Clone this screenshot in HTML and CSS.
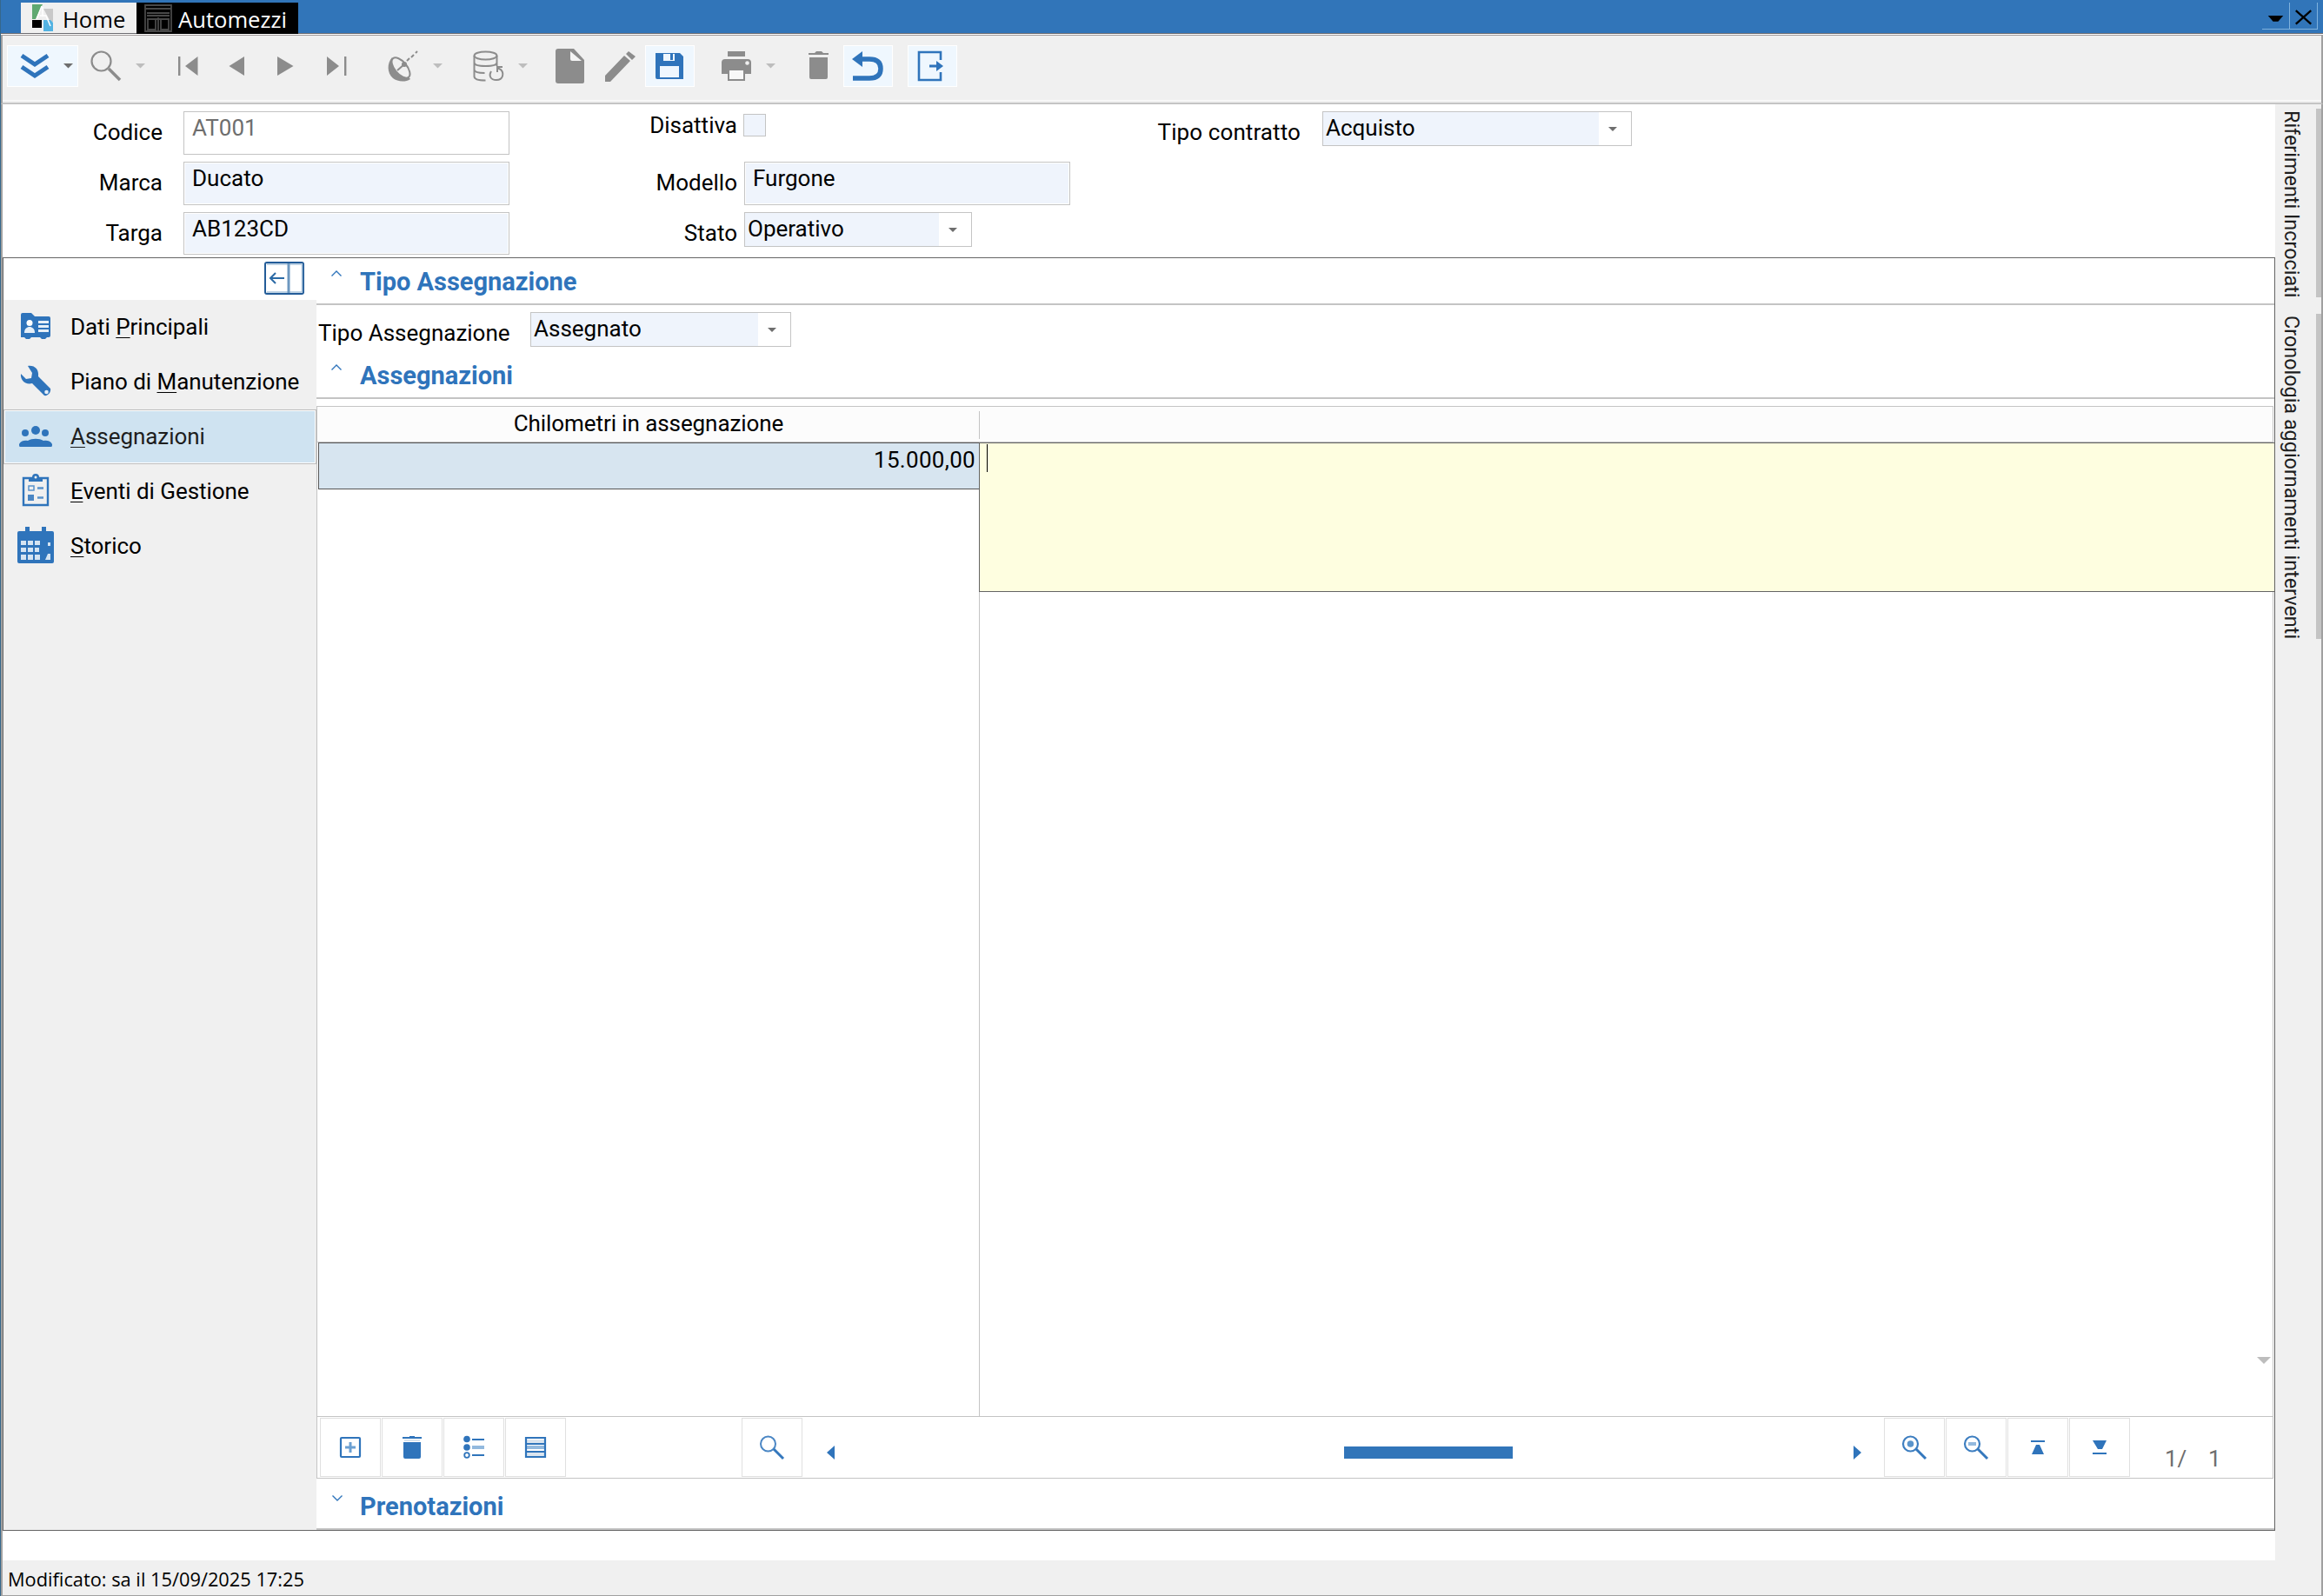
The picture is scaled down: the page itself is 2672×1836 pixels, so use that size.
FILE: index.html
```html
<!DOCTYPE html>
<html lang="it">
<head>
  <meta charset="UTF-8">
  <title>Automezzi</title>
  <link rel="stylesheet" href="styles.css">
</head>
<body>
  <div class="titlebar">
    <div class="tab">
      <svg class="tab-icon" width="24" height="31" viewBox="0 0 24 31">
        <path d="M0 0h12L4 17H0z" fill="#5fa971"/>
        <path d="M13 5h11v15h-3z" fill="#c9c9c9"/>
        <path d="M0 18h11v9H0z" fill="#000"/>
        <path d="M13 18h8l3 3v10H13z" fill="#53b3e2"/>
        <path d="M11 2 5 17M9 13h7l5 12M12 3v11" fill="none" stroke="#fff" stroke-width="1.5"/>
      </svg>
      <span class="tab-home">Home</span>
    </div>
    <div class="tab active">
      <svg class="tab-icon" width="32" height="32" viewBox="0 0 32 32">
        <path d="M1 1h30v30H1zM1 5h30M3 10h26M3 13h26M3 17h26M4 17v12h9V17M19 17v12h9V17M16 15v15" fill="none" stroke="#484848" stroke-width="1.8"/>
      </svg>
      <span class="tab-auto">Automezzi</span>
    </div>
    <div class="win-buttons">
      <svg width="32" height="30" viewBox="0 0 32 30"><path d="M7 15h18l-6 7h-6z" fill="#000"/></svg>
      <svg width="32" height="30" viewBox="0 0 32 30"><path d="M7 9l18 16M25 9L7 25" stroke="#000" stroke-width="2.4"/></svg>
    </div>
  </div>

  <div class="toolbar">
    <div class="group">
      <svg class="hot" width="82" height="48" viewBox="0 0 82 48">
        <path d="M17 12l15 10 15-10M17 25l15 10 15-10" fill="none" stroke="#2f74bb" stroke-width="5"/>
        <path d="M65 21h11l-5.500 5.500z" fill="#6e6e6e"/>
      </svg>
      <svg width="82" height="48" viewBox="0 0 82 48">
        <ellipse cx="26.500" cy="18.500" rx="11" ry="11" fill="none" stroke="#8c8c8c" stroke-width="2.200"/>
        <path d="M35 27l13 13" stroke="#8c8c8c" stroke-width="3.500"/>
        <path d="M66 21h11l-5.500 5.500z" fill="#bdbdbd"/>
      </svg>
    </div>
    <div class="group">
      <svg width="57" height="48" viewBox="0 0 57 48"><path d="M17 13h2.400v22H17zM39.500 13v22L25 24z" fill="#8c8c8c"/></svg>
      <svg width="57" height="48" viewBox="0 0 57 48"><path d="M36 13v22L18.500 24z" fill="#8c8c8c"/></svg>
      <svg width="57" height="48" viewBox="0 0 57 48"><path d="M17 13v22l18.500-11z" fill="#8c8c8c"/></svg>
      <svg width="57" height="48" viewBox="0 0 57 48"><path d="M17 13v22l14-11zM37 13h2.400v22H37z" fill="#8c8c8c"/></svg>
    </div>
    <div class="group">
      <svg width="82" height="48" viewBox="0 0 82 48">
        <path d="M19 14c-6 7-6 18 1 24 5 4 14 5 20 1z" fill="#8c8c8c"/>
        <ellipse cx="29" cy="26" rx="14" ry="7" transform="rotate(50 29 26)" fill="#f0f0f0" stroke="#8c8c8c" stroke-width="2"/>
        <path d="M25 29l8-7M41 14l3-3M46 9l2-2M36 18l3-3" stroke="#8c8c8c" stroke-width="2"/>
        <circle cx="33" cy="22" r="3" fill="#8c8c8c"/>
        <path d="M66 21h11l-5.500 5.500z" fill="#bdbdbd"/>
      </svg>
    </div>
    <div class="group">
      <svg width="82" height="48" viewBox="0 0 82 48">
        <g fill="none" stroke="#8c8c8c" stroke-width="2">
          <ellipse cx="28.500" cy="12" rx="13" ry="4.500"/>
          <path d="M15.500 12v24c0 3 6 4.500 13 4.500M41.500 12v12M15.500 20c0 3 6 4 13 4s13-1 13-4M15.500 28c0 3 5 4 12 4"/>
          <path d="M35 30c-3 5-1 10 6 10 8 0 9-8 5-12l-4-2M42 31v-6h6"/>
        </g>
        <path d="M66 21h11l-5.500 5.500z" fill="#bdbdbd"/>
      </svg>
    </div>
    <div class="group">
      <svg width="57" height="48" viewBox="0 0 57 48">
        <path d="M14 4h18l12 13v25q0 2-2 2H14q-3 0-3-3V7q0-3 3-3z" fill="#8c8c8c"/>
        <path d="M28 7l13 11H30q-2 0-2-2z" fill="#f4f4f4"/>
      </svg>
      <svg width="57" height="48" viewBox="0 0 57 48">
        <path d="M11 42v-7l22-23 7 6-23 24zM35 10l3-3 8 6-4 4z" fill="#8c8c8c"/>
      </svg>
      <svg class="hot" width="57" height="48" viewBox="0 0 57 48">
        <path d="M12 9h28l4 4v26H14q-2 0-2-2z" fill="#2f74bb"/>
        <path d="M21 10h13v8H21zM17 24h22v13H17z" fill="#eff7fe"/>
        <path d="M29 10h3v7h-3z" fill="#2f74bb"/>
      </svg>
    </div>
    <div class="group">
      <svg width="82" height="48" viewBox="0 0 82 48">
        <path d="M22 7h20v6H22zM19 16h26q4 0 4 4v13h-7v-5H22v5h-7V20q0-4 4-4z" fill="#8c8c8c"/>
        <path d="M23 28h18v12H23z" fill="#f8f8f8" stroke="#8c8c8c" stroke-width="2"/>
        <circle cx="44.500" cy="20.500" r="2.300" fill="#f0f0f0"/>
        <path d="M66 21h11l-5.500 5.500z" fill="#bdbdbd"/>
      </svg>
    </div>
    <div class="group">
      <svg width="57" height="48" viewBox="0 0 57 48"><path d="M17 9h7l2-2h6l2 2h6v2H17zM18 14h21v23q0 2-2 2H20q-2 0-2-2z" fill="#8c8c8c"/></svg>
      <svg class="hot" width="57" height="48" viewBox="0 0 57 48">
        <path d="M22 16h8q13 0 13 11t-13 11H11" fill="none" stroke="#2f74bb" stroke-width="5.500"/>
        <path d="M10 16L22 7v18z" fill="#2f74bb"/>
      </svg>
    </div>
    <div class="group exit">
      <svg class="hot" width="57" height="48" viewBox="0 0 57 48">
        <path d="M38 17V8H13v32h25v-9" fill="none" stroke="#2f74bb" stroke-width="2.600"/>
        <path d="M25 24h9" stroke="#2f74bb" stroke-width="3"/><path d="M33 18l8 6-8 6z" fill="#2f74bb"/>
      </svg>
    </div>
  </div>

  <div class="middle">
    <div class="content">
      <div class="form">
        <label>Codice</label>
        <div class="field readonly">AT001</div>
        <label class="near raised">Disattiva</label>
        <div class="check"></div>
        <label class="wide">Tipo contratto</label>
        <div class="combo contratto"><span>Acquisto</span><i></i></div>

        <label>Marca</label>
        <div class="field">Ducato</div>
        <label class="near">Modello</label>
        <div class="field">Furgone</div>
        <div></div><div></div>

        <label>Targa</label>
        <div class="field short">AB123CD</div>
        <label class="near">Stato</label>
        <div class="combo stato"><span>Operativo</span><i></i></div>
      </div>

      <div class="panel">
        <div class="sidebar">
          <div class="collapse">
            <svg width="46" height="38" viewBox="0 0 46 38">
              <rect x="1" y="1" width="44" height="36" rx="2" fill="#fff" stroke="#235c98" stroke-width="2"/>
              <path d="M3 3h40M3 35h40M43.500 3v32" stroke="#a9c3db" stroke-width="1.500"/>
              <path d="M28 2v34" stroke="#6d98c0" stroke-width="3"/>
              <path d="M8 19h15" stroke="#2b6aa6" stroke-width="2"/>
              <path d="M13 13l-6 6 6 6" fill="none" stroke="#2b6aa6" stroke-width="2"/>
            </svg>
          </div>
          <div class="item">
            <svg width="76" height="63" viewBox="4 0 76 63">
              <path d="M24 17q0-2 2-2h10l4 4h16q2 0 2 2v20q0 2-2 2h-2l-2 2h-4l-2-2H36l-2 2h-4l-2-2h-4z" fill="#2f74bb"/>
              <circle cx="34" cy="26.500" r="3.500" fill="#fff"/>
              <path d="M28 38c0-5 3-7 6-7s6 2 6 7z" fill="#e6eff8"/>
              <path d="M44 24h12v3H44zM44 29h12v3H44zM44 34h12v3H44z" fill="#e6eff8"/>
            </svg>
            <span>Dati <u>P</u>rincipali</span>
          </div>
          <div class="item">
            <svg width="76" height="63" viewBox="4 0 76 63">
              <path d="M32 13c8-1 13 4 12 12l14 14c1 4-3 9-7 8L37 33c-8 2-14-4-13-11l6 6 6-1 1-6z" fill="#2f74bb"/>
              <circle cx="53.500" cy="43" r="2.300" fill="#e6eff8"/>
            </svg>
            <span>Piano di <u>M</u>anutenzione</span>
          </div>
          <div class="item selected">
            <svg width="75" height="61" viewBox="5 1 75 61">
              <circle cx="29" cy="27" r="4" fill="#2f74bb"/><circle cx="52" cy="27" r="4" fill="#2f74bb"/><circle cx="41" cy="24" r="5" fill="#2f74bb"/>
              <path d="M22 41v-1c2-4 6-5 10-4 5-3 13-3 18 0 4-1 8 0 10 4v1q0 2-1 2H23q-1 0-1-2z" fill="#2f74bb"/>
            </svg>
            <span><u>A</u>ssegnazioni</span>
          </div>
          <div class="item">
            <svg width="76" height="63" viewBox="4 0 76 63">
              <path d="M27 16h28v31H27z" fill="none" stroke="#2f74bb" stroke-width="2.400"/>
              <path d="M33 20v-5h4q0-4 4-4t4 4h4v5z" fill="#2f74bb"/><circle cx="41" cy="15" r="1.500" fill="#f0f0f0"/>
              <path d="M33 25h6v5h-6z" fill="none" stroke="#5a92ca" stroke-width="1.500"/>
              <path d="M32 35h7v7h-7z" fill="#4a86c4"/><path d="M43 27.500h7M43 38.500h7" stroke="#5a92ca" stroke-width="2.500"/>
            </svg>
            <span><u>E</u>venti di Gestione</span>
          </div>
          <div class="item">
            <svg width="76" height="63" viewBox="4 0 76 63">
              <path d="M20 16q0-2 2-2h7V9h5v5h14V9h5v5h7q2 0 2 2v33q0 2-2 2H22q-2 0-2-2z" fill="#2f74bb"/>
              <path d="M24 25h6v5h-6zM32 25h6v5h-6zM40 25h6v5h-6zM24 33h6v5h-6zM32 33h6v5h-6zM40 33h5v5h-5zM24 41h6v6h-6zM32 41h6v6h-6zM40 41h6v6h-6zM55 27h3v4h-3zM55 40h3v7h-6z" fill="#d5e4f2"/>
            </svg>
            <span><u>S</u>torico</span>
          </div>
        </div>

        <div class="main">
          <div class="section"><svg width="12" height="7" viewBox="0 0 12 7"><path d="M.5 6.500L6 1l5.500 5.500"/></svg>Tipo Assegnazione</div>
          <div class="row">
            <label>Tipo Assegnazione</label>
            <div class="combo tipo"><span>Assegnato</span><i></i></div>
          </div>
          <div class="section"><svg width="12" height="7" viewBox="0 0 12 7"><path d="M.5 6.500L6 1l5.500 5.500"/></svg>Assegnazioni</div>

          <div class="table">
            <div class="thead">
              <div class="th">Chilometri in assegnazione</div>
            </div>
            <div class="tbody">
              <div class="col-km">
                <div class="cell">15.000,00</div>
              </div>
              <div class="col-note">
                <div class="editor"><div class="cursor"></div></div>
                <svg class="scroll-down" width="16" height="8" viewBox="0 0 16 8"><path d="M0 0h16L8 8z" fill="#bdbdbd"/></svg>
              </div>
            </div>
            <div class="nav">
              <svg class="nbtn" width="70" height="68" viewBox="0 0 70 68">
                <rect x="24" y="23" width="22" height="22" rx="1" fill="#fff" stroke="#2f74bb" stroke-width="2.200"/>
                <path d="M35 28v12M29 34h12" stroke="#6ca0d2" stroke-width="3"/>
              </svg>
              <svg class="nbtn" width="70" height="68" viewBox="0 0 70 68"><path d="M24 22h8v-1h6v1h8v2H24zM25 28h20v17q0 2-2 2H27q-2 0-2-2z" fill="#2f74bb"/><path d="M26 25h18v2H26z" fill="#d8e3ee"/></svg>
              <svg class="nbtn" width="70" height="68" viewBox="0 0 70 68">
                <circle cx="27" cy="24.500" r="3.800" fill="#2f74bb"/><circle cx="27" cy="34" r="3.800" fill="#2f74bb"/><circle cx="27" cy="43" r="2.800" fill="#fff" stroke="#2f74bb" stroke-width="1.800"/>
                <path d="M33 25h14M33 43h14" stroke="#2f74bb" stroke-width="2.200"/><path d="M33 34h14" stroke="#93b9de" stroke-width="4"/>
              </svg>
              <svg class="nbtn" width="70" height="68" viewBox="0 0 70 68">
                <path d="M24 25h22v4H24zM24 40h22v4H24z" fill="#dbe5ef"/><path d="M24 32h22v4H24z" fill="#93b9de"/>
                <path d="M24 23h22v22H24zM24 30h22M24 39h22" fill="none" stroke="#2f74bb" stroke-width="2.200"/>
              </svg>
              <svg class="nbtn find" width="70" height="68" viewBox="0 0 70 68"><circle cx="30.500" cy="30" r="8.500" fill="none" stroke="#4a86c4" stroke-width="2"/><path d="M37 36l11 11" stroke="#3478bd" stroke-width="3"/></svg>
              <div class="hscroll">
                <svg width="9" height="16" viewBox="0 0 9 16"><path d="M9 0v16L0 8z" fill="#2f74bb"/></svg>
                <div class="thumb"></div>
                <svg class="arrow-right" width="9" height="16" viewBox="0 0 9 16"><path d="M0 0v16l9-8z" fill="#2f74bb"/></svg>
              </div>
              <svg class="nbtn" width="70" height="68" viewBox="0 0 70 68"><circle cx="30.500" cy="30" r="8.500" fill="none" stroke="#3d7ec0" stroke-width="2.200"/><circle cx="30.500" cy="30" r="3.800" fill="#5a94cb"/><path d="M37 36l11 11" stroke="#3478bd" stroke-width="3"/></svg>
              <svg class="nbtn" width="70" height="68" viewBox="0 0 70 68"><circle cx="30.500" cy="30" r="8.500" fill="none" stroke="#3d7ec0" stroke-width="2.200"/><path d="M26 30h9" stroke="#93b9de" stroke-width="4"/><path d="M37 36l11 11" stroke="#3478bd" stroke-width="3"/></svg>
              <svg class="nbtn" width="70" height="68" viewBox="0 0 70 68"><path d="M27 26h16v2H27zM33 31h4l5 11H28z" fill="#2f74bb"/></svg>
              <svg class="nbtn" width="70" height="68" viewBox="0 0 70 68"><path d="M27 40h16v2H27zM27 26h16l-5 10h-5z" fill="#2f74bb"/></svg>
              <div class="counter"><span>1/</span><span>1</span></div>
            </div>
          </div>

          <div class="section last"><svg width="12" height="7" viewBox="0 0 12 7"><path d="M.5 .5L6 6l5.500-5.500"/></svg>Prenotazioni</div>
        </div>
      </div>
    </div>

    <div class="side-tabs">
      <div class="side-tab riferimenti">Riferimenti Incrociati</div>
      <div class="side-tab cronologia">Cronologia aggiornamenti interventi</div>
    </div>
  </div>

  <div class="statusbar"><span>Modificato: sa il 15/09/2025 17:25</span></div>
</body>
</html>
```
FILE: styles.css
```css
* { box-sizing: border-box; }
body {
  margin: 0;
  width: 100vw;
  height: 100vh;
  overflow: hidden;
  display: flex;
  flex-direction: column;
  font-family: Roboto, sans-serif;
  font-size: 26px;
  line-height: 30px;
  color: #000;
  background: #fff;
  border-left: 1px solid #35688c;
}
svg { display: block; flex: none; }

/* title bar */
.titlebar {
  display: flex;
  height: 39px;
  flex: none;
  padding: 3px 6px 0 23px;
  background: #3175b9;
  border-bottom: 1px solid #6b6b70;
}
.tab {
  display: flex;
  width: 133px;
  height: 35px;
  padding-left: 13px;
  background: #f0f0f0;
  font-family: "Open Sans", sans-serif;
  font-size: 25.6px;
  line-height: 39px;
  white-space: nowrap;
}
.tab.active {
  width: 186px;
  height: 36px;
  padding-left: 9px;
  background: #000;
  color: #fff;
}
.tab-icon { margin-top: 2px; }
.tab-home { margin-left: 11px; }
.tab-auto { margin-left: 7px; }
.win-buttons {
  display: flex;
  margin-left: auto;
  height: 31px;
  border-bottom: 1px solid #7fb2dd;
}
.win-buttons svg { border-right: 1px solid #7fb2dd; }

/* toolbar */
.toolbar {
  display: flex;
  gap: 16px;
  height: 80px;
  flex: none;
  margin-top: 1px;
  padding: 11px 0 0 5px;
  background: #f0f0f0;
  border-left: 2px solid #a0a0a0;
  border-right: 2px solid #a0a0a0;
  border-top: 1px solid #a09a9a;
  border-bottom: 2px solid #c4c4c4;
  box-shadow: inset 0 -2px #f0f0f0, inset 0 -3px #fafafa;
}
.group { display: flex; height: 48px; }
.group.exit { margin-left: 1px; }
.hot { background: #eff7fe; box-shadow: inset 0 0 0 1px #fff; }

.middle {
  display: flex;
  flex: 1;
  min-height: 0;
  border-left: 2px solid #a0a0a0;
  border-right: 2px solid #a0a0a0;
}
.content { flex: 1; display: flex; flex-direction: column; }

/* form */
.form {
  display: grid;
  grid-template-columns: 208px 375px 270px 375px 290px 356px;
  grid-template-rows: 58px 58px 52px;
  height: 176px;
  padding-top: 8px;
}
.form label { text-align: right; padding: 9px 24px 0 0; }
.form label.near { padding-right: 8px; }
.form label.raised { padding-top: 1px; }
.form label.wide { padding-right: 25px; letter-spacing: .1px; }
.field {
  height: 50px;
  padding: 3px 9px;
  background: #eff4fc;
  border: 1px solid #c4c4c4;
  box-shadow: inset 0 0 0 1px #fff;
}
.field.readonly { background: #fff; color: #6e6e6e; }
.field.short { height: 49px; }
.check {
  width: 26px;
  height: 26px;
  margin: 3px 0 0 -1px;
  background: #eff4fc;
  border: 1px solid #c4c4c4;
}
.combo {
  display: flex;
  height: 40px;
  border: 1px solid #c4c4c4;
}
.combo span { flex: 1; padding: 3px 3px; background: #eff4fc; }
.combo i { width: 37px; background: #fff; }
.combo i::before {
  content: "";
  display: block;
  margin: 17px 0 0 11px;
  width: 0;
  border: 5.5px solid transparent;
  border-top-color: #6e6e6e;
  border-bottom: 0;
}
.contratto { width: 356px; }
.stato { width: 262px; }
.tipo { width: 300px; }

/* main panel */
.panel {
  display: flex;
  height: 1465px;
  border: 1px solid #646464;
}
.sidebar { width: 360px; background: #f0f0f0; }
.collapse {
  display: flex;
  justify-content: flex-end;
  height: 48px;
  padding: 4px 14px 0 0;
  background: #fff;
}
.item { display: flex; height: 63px; }
.item span { padding: 16px 0 0 1px; white-space: nowrap; letter-spacing: -.05px; }
.item u { text-decoration-thickness: 1px; text-underline-offset: 3px; }
.item.selected {
  background: #cfe3f1;
  border: 1px solid #bdbdbd;
  box-shadow: inset 0 0 0 1px #fff;
  color: #1e1e1e;
}
.item.selected span { padding-top: 15px; }
.main { flex: 1; display: flex; flex-direction: column; min-width: 0; }
.section {
  display: flex;
  height: 54px;
  flex: none;
  padding-left: 17px;
  font-size: 29px;
  font-weight: bold;
  line-height: 54px;
  color: #2f74bb;
  border-bottom: 2px solid #c4c4c4;
}
.section svg { margin: 14px 21px 0 0; fill: none; stroke: #2f74bb; stroke-width: 1.4; }
.section.last { margin-top: 5px; padding-left: 18px; }
.section.last svg { margin-right: 20px; }
.row { display: flex; height: 54px; padding: 8px 0 0 2px; }
.row label { width: 244px; padding-top: 9px; }

/* table */
.table {
  display: flex;
  flex-direction: column;
  height: 1234px;
  margin: 8px 1px 0 0;
  border: 1px solid #c4c4c4;
}
.thead {
  display: flex;
  height: 41px;
  flex: none;
  padding: 5px 0 3px 1px;
  background: #fcfcfc;
  border-bottom: 1px solid #c4c4c4;
}
.th {
  width: 761px;
  text-align: center;
  line-height: 28px;
  letter-spacing: -.08px;
  border-right: 1px solid #c4c4c4;
}
.tbody { display: flex; flex: 1; }
.col-km { width: 761px; padding-left: 1px; }
.cell {
  height: 54px;
  padding: 4px 4px 0 0;
  text-align: right;
  letter-spacing: .3px;
  background: #d7e5f0;
  border: 1px solid #555;
  border-right: 0;
}
.col-note {
  flex: 1;
  display: flex;
  flex-direction: column;
  border-left: 1px solid #c4c4c4;
}
.editor {
  height: 172px;
  margin: 0 -3px 0 -1px;
  padding: 1px 8px;
  background: #fefee0;
  border: 1px solid #646464;
}
.cursor { width: 1px; height: 32px; background: #000; }
.scroll-down { margin: auto 2px 60px auto; }
.nav {
  display: flex;
  gap: 1px;
  height: 71px;
  flex: none;
  padding: 1px 0 0 3px;
  border-top: 1px solid #c4c4c4;
}
.nbtn { box-shadow: inset 0 0 0 1px #e0e0e0; }
.find { margin-left: 201px; }
.hscroll { flex: 1; display: flex; padding: 32px 25px 0 27px; }
.thumb { width: 194px; height: 14px; margin: 1px 0 0 586px; background: #3175b9; }
.arrow-right { margin-left: auto; }
.counter { display: flex; width: 163px; padding: 32px 0 0 39px; color: #6e6e6e; }
.counter span:first-child { width: 50px; }

/* right side tabs */
.side-tabs { width: 53px; background: #f0f0f0; padding-top: 5px; }
.side-tab {
  writing-mode: vertical-rl;
  width: 53px;
  height: 217px;
  padding: 2px 13px 0 0;
  font-size: 23.4px;
  line-height: 30px;
  white-space: nowrap;
  color: #1e1e1e;
  border-right: 6px solid #c4c4c4;
}
.cronologia { height: 374px; margin-top: 19px; }

.statusbar {
  height: 41px;
  flex: none;
  padding-left: 6px;
  background: #f0f0f0;
  border-left: 2px solid #a0a0a0;
  border-right: 2px solid #a0a0a0;
  border-bottom: 1px solid #a0a0a0;
  font-family: "Open Sans", sans-serif;
  font-size: 21.8px;
  line-height: 43px;
}
```
